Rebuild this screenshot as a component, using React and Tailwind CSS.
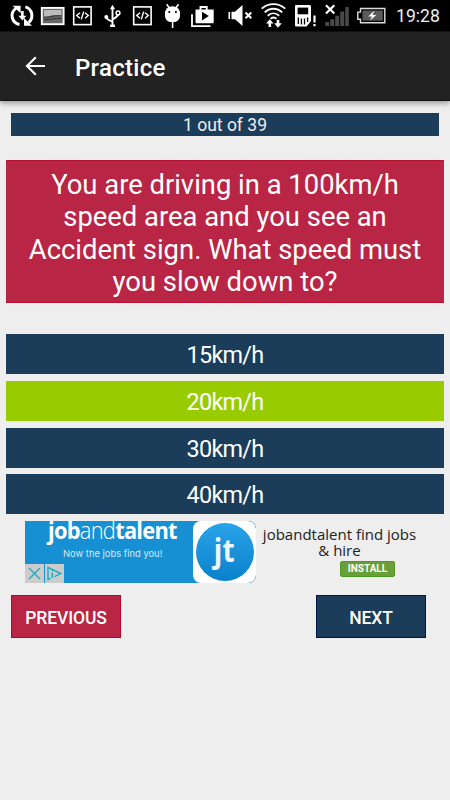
import React from "react";

const answers = [
  { label: "15km/h", correct: false },
  { label: "20km/h", correct: true },
  { label: "30km/h", correct: false },
  { label: "40km/h", correct: false },
];

function SyncIcon() {
  return (
    <svg width="37" height="31" viewBox="0 0 37 31" fill="none" stroke="#fff">
      <path d="M19.5 24.6a9 9 0 0 1-3.6-16.2" strokeWidth="3" />
      <path d="M25.4 6.9a9 9 0 0 1 3.2 15.6" strokeWidth="3" />
      <path d="M12.6 5.7h8v7.6z" fill="#fff" stroke="none" />
      <path d="M32 25.8h-8V18z" fill="#fff" stroke="none" />
      <path d="M22.4 11v6" strokeWidth="2.6" />
      <path d="M18.4 15.7h8l-4 4.8z" fill="#fff" stroke="none" />
    </svg>
  );
}

function PictureIcon() {
  return (
    <svg width="31" height="31" viewBox="37 0 31 31">
      <rect x="41.8" y="7.900" width="21.800" height="16.300" fill="#666" stroke="#fff" strokeWidth="1.900" />
      <path d="M44 10h17.5v5.5c-4 .2-7-1-10 0s-5 1.5-7.500 1z" fill="#bbb" />
      <path d="M44 17c6 1 9-2 17.500-1.200M44 19.500c7 1 10-2 17.500-1" stroke="#222" strokeWidth=".8" fill="none" />
    </svg>
  );
}

function CodeIcon() {
  return (
    <svg width="30" height="31" viewBox="0 0 30 31" fill="none" stroke="#fff">
      <rect x="5.700" y="6.900" width="17.400" height="17.700" strokeWidth="1.600" />
      <path d="M12 12.700l-3.300 2.800 3.300 2.800M17 12.700l3.300 2.800-3.300 2.800M15.700 11.600l-2.400 7.800" strokeWidth="1.400" />
    </svg>
  );
}

function UsbIcon() {
  return (
    <svg width="30" height="31" viewBox="98 0 30 31" fill="none" stroke="#fff" strokeWidth="1.900">
      <path d="M112.500 8v17M112.500 22.500c-1-2.500-6.200-2-6.200-5.500M112.500 20c1-2.600 5.500-2 5.500-6" />
      <circle cx="106.300" cy="17" r="2" fill="#fff" stroke="none" />
      <circle cx="118" cy="13" r="1.900" strokeWidth="1.500" />
      <path d="M109.900 9.200l2.600-4.400 2.600 4.400z" fill="#fff" stroke="none" />
      <path d="M110.100 25.800h4.800" strokeWidth="2.400" />
    </svg>
  );
}

function AndroidIcon() {
  return (
    <svg width="26" height="31" viewBox="158 0 26 31">
      <path d="M165 11h15v4.500c0 4-3 6.500-5.800 6.500h-3.400c-3 0-5.800-2.500-5.800-6.500z" fill="#fff" />
      <path d="M165 13a7.500 6.800 0 0 1 15 0z" fill="#fff" />
      <path d="M166.700 4.200l2.600 3.800M178.500 4.200l-2.600 3.800M172.600 21v7" stroke="#fff" strokeWidth="1.600" />
      <circle cx="169.300" cy="12" r="1.100" fill="#000" />
      <circle cx="175.900" cy="12" r="1.100" fill="#000" />
    </svg>
  );
}

function PlayStoreIcon() {
  return (
    <svg width="38" height="31" viewBox="184 0 38 31">
      <path d="M192 14.300v11.900h18.500" stroke="#fff" strokeWidth="1.800" fill="none" />
      <path d="M200.500 10V7h6.200v3" stroke="#fff" strokeWidth="1.900" fill="none" />
      <path d="M195.500 9.500h18.200v12.800q0 1-1 1h-16.200q-1 0-1-1z" fill="#fff" />
      <path d="M202 11.800l6.800 4.300-6.800 4.500z" fill="#000" />
    </svg>
  );
}

function MuteIcon() {
  return (
    <svg width="34" height="31" viewBox="222 0 34 31">
      <path d="M229.300 12v7" stroke="#fff" strokeWidth="1.600" />
      <path d="M231.500 11.800h3.500l7.500-6.800v21l-7.500-6.800h-3.500z" fill="#fff" />
      <path d="M245.500 12.500l5.800 5.800m0-5.800l-5.800 5.800" stroke="#fff" strokeWidth="2" />
    </svg>
  );
}

function WifiIcon() {
  return (
    <svg width="36" height="31" viewBox="256 0 36 31" fill="none" stroke="#fff" strokeWidth="1.900">
      <path d="M261.700 8.600c6.500-6 17-6 23.500 0M264.700 12.400c5-4.800 12.500-4.800 17.500 0M267.700 15.800c3.500-3.300 8-3.300 11.500 0M270.500 18.800c2-1.700 4-1.700 6 0" />
      <path d="M269.800 27v-4M278 20v4" strokeWidth="2.600" />
      <path d="M266 23.500l3.800-4.300 3.800 4.300zM274.200 23.200h7.600l-3.800 4.600z" fill="#fff" stroke="none" />
    </svg>
  );
}

function SdCardIcon() {
  return (
    <svg width="29" height="31" viewBox="292 0 29 31">
      <path d="M296 5h13.500q1.500 0 1.500 1.500v14.500l-4.500 5.500h-10.500q-1 0-1-1v-19.500q0-1 1-1z" fill="#fff" />
      <path d="M297.600 7.600h10.600v6.700h-10.600z" fill="#000" />
      <path d="M298.300 17.500v6.500M301.400 18.500v6M304.500 18.500v6M307.600 17.500v4.500" stroke="#000" strokeWidth="1.300" />
      <path d="M314.500 15.500v7M314.500 24v2.300" stroke="#fff" strokeWidth="2.200" />
    </svg>
  );
}

function SignalIcon() {
  return (
    <svg width="32" height="31" viewBox="321 0 32 31">
      <path
        d="M325.200 22h4v4h-4zM330.200 19.300h4V26h-4zM335.200 15.800h4V26h-4zM340.200 11.500h4V26h-4zM345.200 7h3.600v19h-3.600z"
        fill="#484848"
      />
      <path d="M326 5.200l8.300 8.300m0-8.300l-8.300 8.300" stroke="#fff" strokeWidth="2.200" />
    </svg>
  );
}

function BatteryIcon() {
  return (
    <svg width="38" height="31" viewBox="353 0 38 31">
      <path d="M360.500 8.500h24.300v14.200h-24.300v-3.400h-2.700v-7.200h2.700z" fill="#000" stroke="#ddd" strokeWidth="1.400" />
      <path d="M362.500 10.500h20.300v10.200h-20.300z" fill="#5a5a5a" />
      <path d="M374.600 10.600l-6.400 6h3.600l-1.700 4 6.200-5.500h-3.700z" fill="#fff" />
    </svg>
  );
}

function StatusBar() {
  return (
    <div className="flex h-[31px] bg-black">
      <SyncIcon />
      <PictureIcon />
      <CodeIcon />
      <UsbIcon />
      <CodeIcon />
      <AndroidIcon />
      <PlayStoreIcon />
      <MuteIcon />
      <WifiIcon />
      <SdCardIcon />
      <SignalIcon />
      <BatteryIcon />
      <span className="ml-[5px] mt-[2px] text-[17.600px] leading-[29px] text-[#eee]">19:28</span>
    </div>
  );
}

function AdBanner() {
  return (
    <div className="mt-[6.900px] ml-[25px] flex h-[62px] w-[400px]">
      <div className="relative h-[62px] w-[231px] overflow-hidden rounded-r-lg bg-[#1790d3]">
        <div className="-mt-[8px] ml-[23px] w-[140px] origin-left scale-x-[0.91] whitespace-nowrap font-['Open_Sans',sans-serif] text-[24px] leading-[34px] tracking-[-0.8px] text-white">
          <span className="font-bold">job</span>
          <span className="font-light">and</span>
          <span className="font-bold">talent</span>
        </div>
        <div className="ml-[38px] font-[Inter,sans-serif] text-[9.400px] leading-[14px] text-[#d3eafa]">
          Now the jobs find you!
        </div>
        <div className="absolute bottom-0 left-0 flex gap-px">
          <svg width="19" height="19" viewBox="0 0 19 19">
            <path d="M0 0h19v19H0z" fill="#ccc" />
            <path d="M4 4l11 11M15 4L4 15" stroke="#1cacc0" strokeWidth="1.400" />
          </svg>
          <svg width="19" height="19" viewBox="0 0 19 19" fill="none" stroke="#1cacc0" strokeWidth="1.400">
            <path d="M0 0h19v19H0z" fill="#ccc" stroke="none" />
            <path d="M5.500 14.300L3 15.600V3.400L15.800 9.500L9.500 12.700M7.300 8.500v5.500M7.300 5.800v1.400" />
          </svg>
        </div>
        <div className="absolute top-0 right-0 h-[62px] w-[63px] bg-[#1790d3]">
          <div className="flex h-full w-full items-center justify-center rounded-lg bg-white">
            <div className="flex h-[58px] w-[58px] items-center justify-center rounded-full bg-linear-to-b from-[#29a3ea] to-[#0781cb]">
              <span className="-mt-[5px] scale-x-[0.85] font-['Open_Sans',sans-serif] text-[33px] leading-[50px] font-bold text-[#edf6fd]">
                jt
              </span>
            </div>
          </div>
        </div>
      </div>
      <div className="flex w-[167px] flex-col items-center pt-[5px] font-['Open_Sans',sans-serif] text-[15px] leading-[16px] text-[#222]">
        <span className="whitespace-nowrap">jobandtalent find jobs</span>
        <span>&amp; hire</span>
        <button className="ml-[56px] mt-[3px] h-[16px] w-[55px] rounded-[2px] border border-[#4d9a20] bg-[#689f38] font-[Roboto,sans-serif] text-[10px] leading-[14px] font-bold text-white">
          INSTALL
        </button>
      </div>
    </div>
  );
}

export default function App() {
  return (
    <div className="h-[800px] w-[450px] overflow-hidden bg-[#eee] font-[Roboto,sans-serif] text-white">
      <StatusBar />
      <header className="flex h-[70px] items-center border-t border-b border-[#111] bg-[#222] shadow-[0_2px_6px_rgba(0,0,0,0.4)]">
        <svg className="ml-[25px]" width="21" height="20" viewBox="0 0 21 20" fill="none" stroke="#fff" strokeWidth="2.200">
          <path d="M20 10H2M10.800 1.200L2 10l8.800 8.800" />
        </svg>
        <h1 className="ml-[29px] mt-[3px] text-[24px] leading-[28px] font-medium tracking-[0.300px]">Practice</h1>
      </header>

      <div className="mx-[11px] mt-[12px] h-[23px] w-[428px] bg-[#1b3d59] text-center text-[17.500px] leading-[25px] text-[#eee]">
        1 out of 39
      </div>

      <div className="mx-[6px] mt-6 h-[143px] border-t border-b border-[#b81030] bg-[#b92645] px-4 pt-[8px] text-center text-[27.400px] leading-[32.300px]">
        You are driving in a 100km/h speed area and you see an Accident sign. What speed must you slow down to?
      </div>

      <div className="mx-[6px] mt-[31px] flex flex-col gap-[6.800px]">
        {answers.map((answer) => (
          <button
            key={answer.label}
            className={
              answer.correct
                ? "h-[40px] bg-[#99cc00] pt-[3px] text-[23.400px] leading-[37px] tracking-[-0.700px]"
                : "h-[40px] bg-[#1b3d59] pt-[3px] text-[23.400px] leading-[37px] tracking-[-0.700px]"
            }
          >
            {answer.label}
          </button>
        ))}
      </div>

      <AdBanner />

      <div className="mt-[12px] mr-[24px] ml-[11px] flex justify-between text-[17.500px] font-medium tracking-[-0.100px]">
        <button className="h-[43px] w-[110px] border border-[#b80828] bg-[#b92645] pt-[2px]">PREVIOUS</button>
        <button className="h-[43px] w-[110px] border border-[#001448] bg-[#1b3d59] pt-[2px]">NEXT</button>
      </div>
    </div>
  );
}
